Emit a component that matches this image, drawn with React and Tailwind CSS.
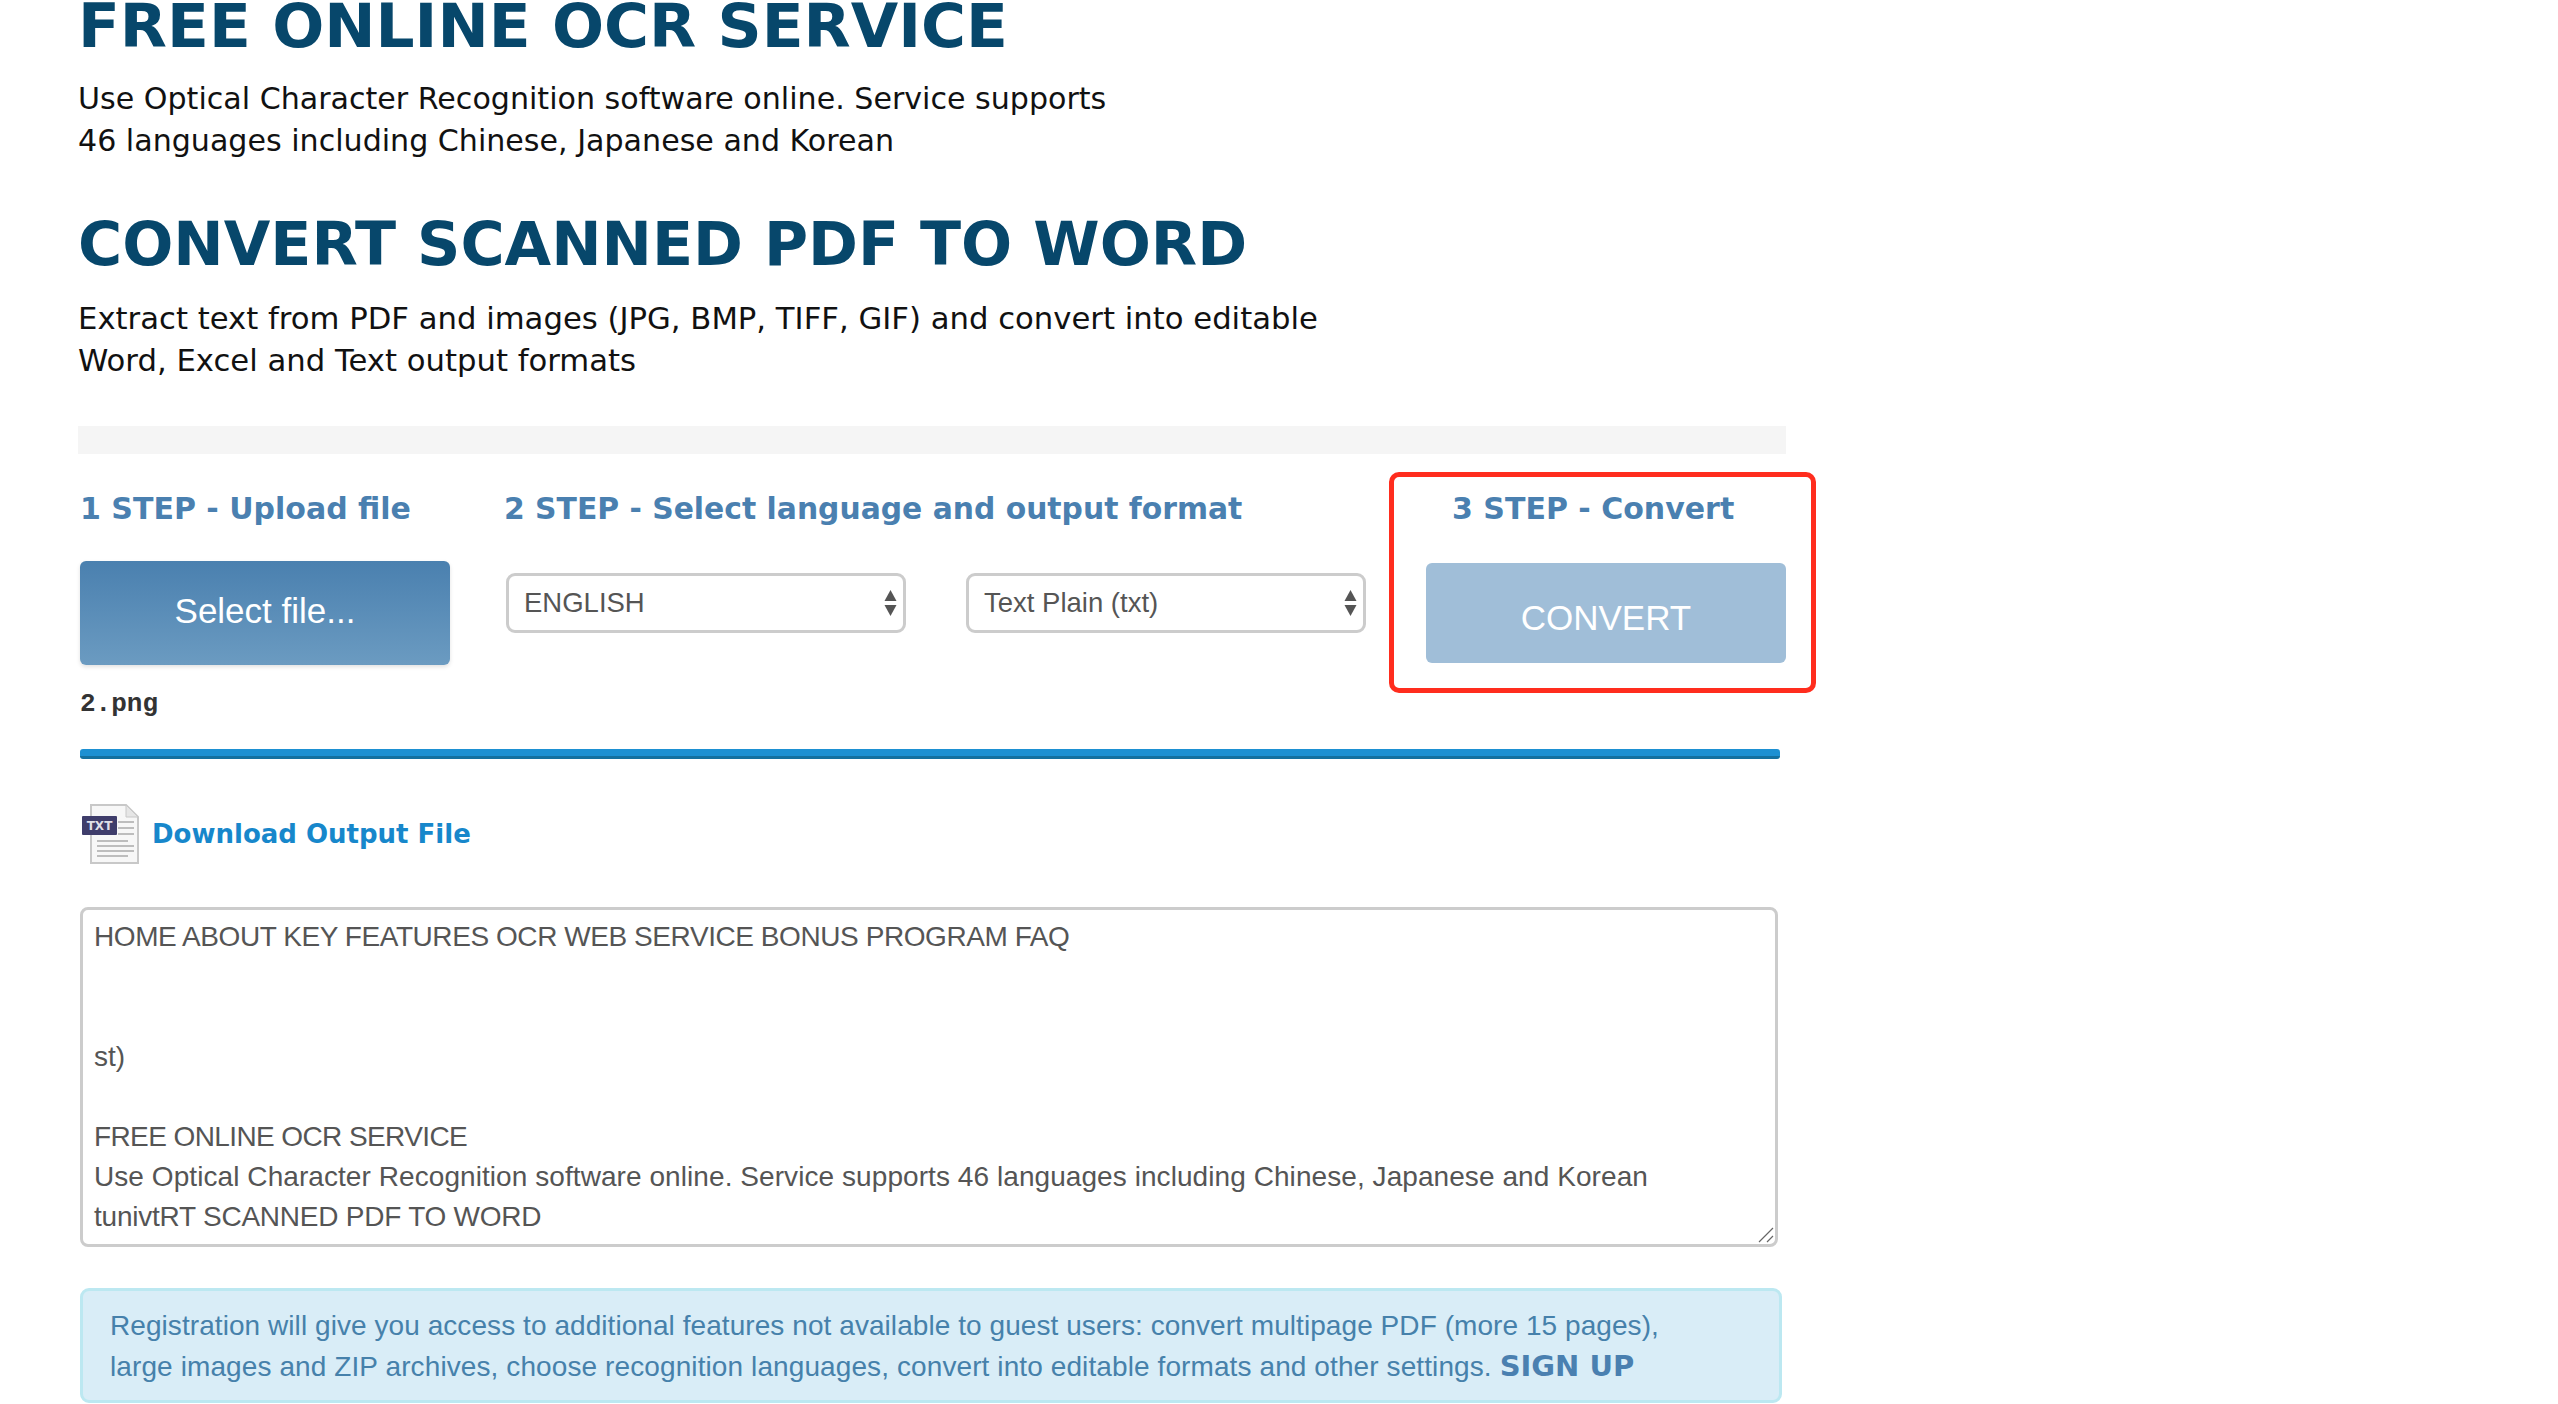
const dejavu = "font-['DejaVu_Sans',sans-serif]";
const stepTitle = "font-['DejaVu_Sans',sans-serif] font-bold text-[30px] leading-[38px] text-[#4a80b0] whitespace-nowrap";

function Arrows() {
  return (
    <svg className="absolute right-[9px] top-[16px] pointer-events-none" width="13" height="28" viewBox="0 0 13 28">
      <path d="M6.5 1 L12.5 12 L0.5 12 Z" fill="#555" />
      <path d="M6.5 27 L12.5 16 L0.5 16 Z" fill="#555" />
    </svg>
  );
}

function SelectBox({ value }) {
  return (
    <div className="relative w-[400px] h-[60px]">
      <select
        defaultValue={value}
        className="w-full h-full appearance-none bg-white border-[3px] border-[#ccc] rounded-[9px] pl-[15px] pr-8 text-[27.5px] text-[#555] font-['Liberation_Sans',sans-serif] outline-none"
      >
        <option>{value}</option>
      </select>
      <Arrows />
    </div>
  );
}

function TxtIcon() {
  return (
    <svg width="58" height="62" viewBox="0 0 58 62" className="shrink-0">
      <path d="M9 2 H44 L56 14 V60 H9 Z" fill="#f7f7f7" stroke="#c8c8c8" strokeWidth="2" />
      <path d="M44 2 V14 H56 Z" fill="#e6e6e6" stroke="#c8c8c8" strokeWidth="1" />
      <g stroke="#bdbdbd" strokeWidth="2">
        <path d="M36 19 H52" />
        <path d="M36 25 H52" />
        <path d="M36 31 H52" />
        <path d="M15 38 H46" />
        <path d="M15 43 H52" />
        <path d="M15 48 H52" />
        <path d="M15 53 H46" />
      </g>
      <rect x="0" y="13" width="35" height="19" rx="1" fill="#3f3d6b" />
      <text x="17.5" y="27" textAnchor="middle" fontSize="12" fontWeight="700" fill="#dfdfe8" fontFamily="DejaVu Sans, sans-serif">TXT</text>
    </svg>
  );
}

function ResizeHandle() {
  return (
    <svg className="absolute right-[1px] bottom-[1px]" width="16" height="16" viewBox="0 0 16 16">
      <path d="M1 15 L15 1 M9 15 L15 9" stroke="#666" strokeWidth="1.2" fill="none" />
    </svg>
  );
}

export default function App() {
  return (
    <div className="h-[1404px] overflow-hidden bg-white pl-[78px] text-[#111]">
      <h1 className={`${dejavu} font-bold text-[61.3px] leading-[52px] text-[#07476b]`}>FREE ONLINE OCR SERVICE</h1>
      <p className={`${dejavu} mt-[26px] text-[30.1px] leading-[42px] w-[1200px]`}>
        Use Optical Character Recognition software online. Service supports
        <br />
        46 languages including Chinese, Japanese and Korean
      </p>
      <h2 className={`${dejavu} mt-[46px] font-bold text-[60.2px] leading-[72px] text-[#07476b]`}>CONVERT SCANNED PDF TO WORD</h2>
      <p className={`${dejavu} mt-[18px] text-[30.7px] leading-[42px] w-[1400px]`}>
        Extract text from PDF and images (JPG, BMP, TIFF, GIF) and convert into editable
        <br />
        Word, Excel and Text output formats
      </p>

      <div className="mt-[44px] w-[1708px] h-[28px] bg-[#f5f5f5]" />

      <div className="flex ml-[2px] mt-[18px] h-[221px]">
        <div className="w-[370px]">
          <div className={`${stepTitle} mt-[18px]`}>1 STEP - Upload file</div>
          <button className="mt-[33px] w-[370px] h-[104px] pb-[4px] rounded-[6px] bg-gradient-to-b from-[#4a80af] to-[#6b9bc1] text-white text-[35px] font-['Liberation_Sans',sans-serif] shadow-[0_2px_4px_rgba(0,0,0,0.12)]">
            Select file...
          </button>
          <div className="mt-[24px] font-['Liberation_Mono',monospace] font-bold text-[26px] leading-[30px] text-[#333]">2.png</div>
        </div>

        <div className="ml-[56px]">
          <div className={`${stepTitle} !text-[29.8px] mt-[18px] -ml-[2px]`}>2 STEP - Select language and output format</div>
          <div className="flex gap-[60px] mt-[45px]">
            <SelectBox value="ENGLISH" />
            <SelectBox value="Text Plain (txt)" />
          </div>
        </div>

        <div className="ml-[23px] w-[427px] h-[221px] border-[5px] border-[#ff2d1e] rounded-[10px] pl-[32px]">
          <div className={`${stepTitle} mt-[13px] ml-[26px]`}>3 STEP - Convert</div>
          <button className="mt-[35px] w-[360px] h-[100px] pt-[10px] rounded-[6px] bg-[#a0bed8] text-white text-[35px] font-['Liberation_Sans',sans-serif]">
            CONVERT
          </button>
        </div>
      </div>

      <div className="ml-[2px] mt-[56px] w-[1700px] h-[10px] rounded-[3px] bg-[#1d90d2] border-b-[3px] border-[#14709f]" />

      <a className="ml-[4px] mt-[44px] flex items-center gap-[12px]">
        <TxtIcon />
        <span className={`${dejavu} font-bold text-[26px] text-[#1787cb]`}>Download Output File</span>
      </a>

      <div className="relative ml-[2px] mt-[42px] w-[1698px] h-[340px] border-[3px] border-[#ccc] rounded-[8px] px-[11px] py-[7px] text-[28px] leading-[40px] text-[#555] font-['Liberation_Sans',sans-serif] whitespace-nowrap">
        <div className="tracking-[-0.43px]">HOME ABOUT KEY FEATURES OCR WEB SERVICE BONUS PROGRAM FAQ</div>
        <div className="mt-[80px]">st)</div>
        <div className="mt-[40px] tracking-[-0.6px]">FREE ONLINE OCR SERVICE</div>
        <div className="tracking-[0.07px]">Use Optical Character Recognition software online. Service supports 46 languages including Chinese, Japanese and Korean</div>
        <div className="tracking-[-0.23px]">tunivtRT SCANNED PDF TO WORD</div>
        <ResizeHandle />
      </div>

      <div className="ml-[2px] mt-[41px] w-[1702px] h-[115px] bg-[#d9edf7] border-[3px] border-[#bce8f1] rounded-[9px] pl-[27px] pt-[15px] text-[28px] leading-[40px] text-[#4681ab] font-['Liberation_Sans',sans-serif] whitespace-nowrap">
        <div className="tracking-[0.065px]">Registration will give you access to additional features not available to guest users: convert multipage PDF (more 15 pages),</div>
        <div className="tracking-[0.1px]">
          large images and ZIP archives, choose recognition languages, convert into editable formats and other settings.{" "}
          <span className={`${dejavu} font-bold text-[29px] tracking-normal text-[#4a80b0]`}>SIGN UP</span>
        </div>
      </div>
    </div>
  );
}
